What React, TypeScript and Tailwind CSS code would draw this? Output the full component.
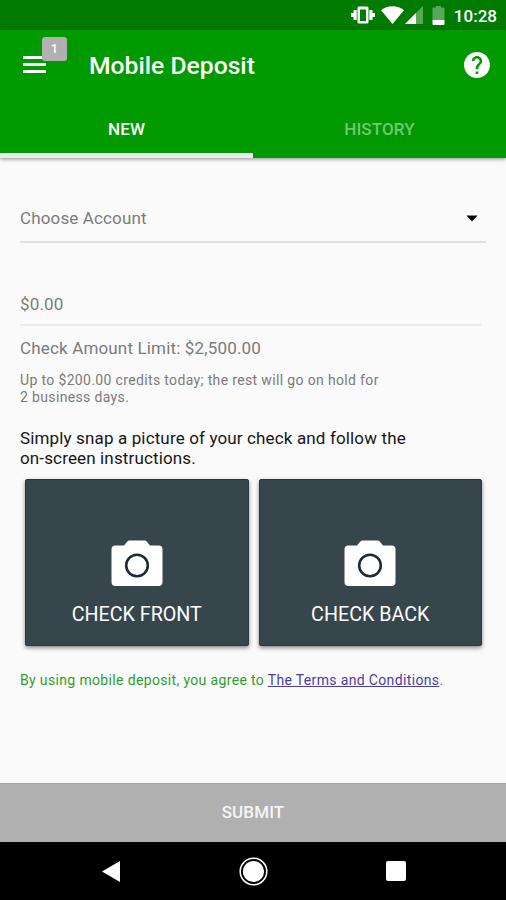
import React, { useState } from 'react';

interface CaptureButtonProps {
  label: string;
}

const StatusBar: React.FC = () => (
  <div className="flex h-[30px] items-center justify-end bg-[#007a00] pr-[9px] text-white">
    {/* Vibrate */}
    <svg className="mr-[6px] h-5 w-6" viewBox="0 0 24 20" fill="currentColor">
      <path fillRule="evenodd" d="M8 1.500h8a1.500 1.500 0 0 1 1.500 1.500v14a1.500 1.500 0 0 1-1.500 1.500H8A1.500 1.500 0 0 1 6.500 17V3A1.500 1.500 0 0 1 8 1.500zM9 4.500v11.500h6V4.500z" />
      <path d="M2.500 5h3.200v10H2.500zM18.300 5h3.200v10h-3.200zM0 8h3v4H0zM21 8h3v4h-3z" />
    </svg>
    {/* Wifi */}
    <svg className="mr-[1px] h-[18px] w-[23px]" viewBox="0 0 22 18" preserveAspectRatio="none" fill="currentColor">
      <path d="M11 18 0 4.200C3 1.600 6.800.2 11 .2s8 1.400 11 4z" />
    </svg>
    {/* Signal */}
    <svg className="mr-[9px] h-[18px] w-[18px]" viewBox="0 0 18 18" fill="currentColor">
      <path opacity=".35" d="M0 18 18 0v18z" />
      <path d="M0 18 11 7v11z" />
    </svg>
    {/* Battery */}
    <svg className="mr-[9px] h-[19px] w-[13px]" viewBox="0 0 13 19" fill="currentColor">
      <path opacity=".35" d="M4 0h5v1.500h2.500a1 1 0 0 1 1 1v11.500h-12V2.500a1 1 0 0 1 1-1H4z" />
      <path d="M.5 14h12v4a1 1 0 0 1-1 1h-10a1 1 0 0 1-1-1z" />
    </svg>
    <span className="pt-[2px] text-[17px] leading-none font-medium">10:28</span>
  </div>
);

const CaptureButton: React.FC<CaptureButtonProps> = ({ label }) => (
  <button className="flex h-[167px] flex-1 flex-col items-center rounded-[2px] border border-[#263840] bg-[#37454d] pt-[59px] text-white shadow-[0_2px_4px_rgba(0,0,0,0.45)]">
    <svg className="h-[48px] w-[52px]" viewBox="0 0 52 48">
      <path
        d="M18.500 1.500h15a3 3 0 0 1 2.200 1L39 6.500h8.500a4 4 0 0 1 4 4V43a4 4 0 0 1-4 4h-43a4 4 0 0 1-4-4V10.500a4 4 0 0 1 4-4H13l3.300-4a3 3 0 0 1 2.200-1z"
        fill="#fff"
      />
      <circle cx="26" cy="26.500" r="10.800" fill="none" stroke="#1d2b36" strokeWidth="2.600" />
    </svg>
    <span className="mt-[14px] text-[19.700px] leading-7">{label}</span>
  </button>
);

const App: React.FC = () => {
  const [activeTab, setActiveTab] = useState('new');

  const tabs = [
    { id: 'new', label: 'NEW' },
    { id: 'history', label: 'HISTORY' },
  ];

  return (
    <div className="flex h-[900px] w-[506px] flex-col overflow-hidden bg-[#fafafa] font-[Roboto,sans-serif]">
      <StatusBar />

      {/* App bar */}
      <header className="z-10 h-[128px] bg-[#009900] text-white shadow-[0_1px_4px_rgba(0,0,0,0.45)]">
        <div className="flex h-[72px] items-center pr-4 pl-[23px]">
          <button className="relative mb-[4px] flex w-[23px] flex-col gap-1">
            <span className="h-[3px] bg-white" />
            <span className="h-[3px] bg-white" />
            <span className="h-[3px] bg-white" />
            <span className="absolute -top-[19px] left-[19px] flex h-6 w-[25px] items-center justify-center rounded-[3px] bg-[#b0b0b0] text-[13px] font-medium">
              1
            </span>
          </button>
          <h1 className="ml-[43px] flex-1 text-[24.700px] font-medium">Mobile Deposit</h1>
          <svg className="mb-[3px] h-[26px] w-[26px]" viewBox="2 2 20 20" fill="currentColor">
            <path d="M12 2C6.480 2 2 6.480 2 12s4.480 10 10 10 10-4.480 10-10S17.520 2 12 2zm1 17h-2v-2h2v2zm2.070-7.750l-.9.920C13.450 12.900 13 13.500 13 15h-2v-.5c0-1.100.450-2.100 1.170-2.830l1.240-1.260c.370-.360.590-.860.590-1.410 0-1.100-.9-2-2-2s-2 .9-2 2H8c0-2.210 1.790-4 4-4s4 1.790 4 4c0 .880-.360 1.680-.930 2.250z" />
          </svg>
        </div>
        <nav className="flex h-14">
          {tabs.map(({ id, label }) => (
            <button
              key={id}
              onClick={() => setActiveTab(id)}
              className={`flex-1 border-b-[5px] pt-[5px] text-[17px] font-medium tracking-[0.1px] ${
                activeTab === id ? 'border-[#ececec] text-white' : 'border-transparent text-[#73c673]'
              }`}
            >
              {label}
            </button>
          ))}
        </nav>
      </header>

      {/* Deposit form */}
      <main className="flex-1 px-5 text-[#7b7b7b]">
        <div className="mt-[36px] flex h-[49px] items-center justify-between border-b-2 border-[#e0e0e0] pt-[2px] pr-2 text-[17px] tracking-[0.14px]">
          <span>Choose Account</span>
          <svg className="h-[7px] w-[12px]" viewBox="0 0 12 7">
            <path d="M.5.5h11L6 6.500z" fill="#000" />
          </svg>
        </div>
        <div className="mt-[43px] mr-[5px] flex h-[40px] items-center border-b-2 border-[#ebebeb] text-[17px] tracking-[0.16px]">$0.00</div>
        <p className="mt-[10px] text-[17px] leading-6 tracking-[0.16px]">Check Amount Limit: $2,500.00</p>
        <p className="mt-3 text-[14px] leading-[17px] tracking-[0.35px]">
          Up to $200.00 credits today; the rest will go on hold for
          <br />2 business days.
        </p>
        <p className="mt-[22px] text-[17px] leading-5 tracking-[0.14px] text-[#161616]">
          Simply snap a picture of your check and follow the
          <br />
          on-screen instructions.
        </p>
        <div className="mt-[11px] mr-1 ml-[5px] flex gap-[10px]">
          <CaptureButton label="CHECK FRONT" />
          <CaptureButton label="CHECK BACK" />
        </div>
        <p className="mt-6 text-[14px] leading-5 tracking-[0.35px] text-[#2e9e2e]">
          By using mobile deposit, you agree to <a className="text-[#4a3fa0] underline">The Terms and Conditions</a>.
        </p>
      </main>

      <button className="h-[59px] border-t border-[#a3a3a3] bg-[#b0b0b0] text-[17px] font-medium tracking-[0.1px] text-[#f5f5f5]">SUBMIT</button>

      {/* System navigation */}
      <div className="flex h-[58px] items-center justify-between bg-black pr-[100px] pl-[102px]">
        <svg className="h-[21px] w-[18px]" viewBox="0 0 18 21" fill="#fff">
          <path d="M18 0v21L0 10.500z" />
        </svg>
        <svg className="h-[29px] w-[29px]" viewBox="0 0 29 29">
          <circle cx="14.500" cy="14.500" r="13.300" fill="none" stroke="#fff" strokeWidth="1.500" />
          <circle cx="14.500" cy="14.500" r="10.600" fill="#fff" />
        </svg>
        <div className="h-5 w-5 rounded-[2px] bg-white" />
      </div>
    </div>
  );
};

export default App;
